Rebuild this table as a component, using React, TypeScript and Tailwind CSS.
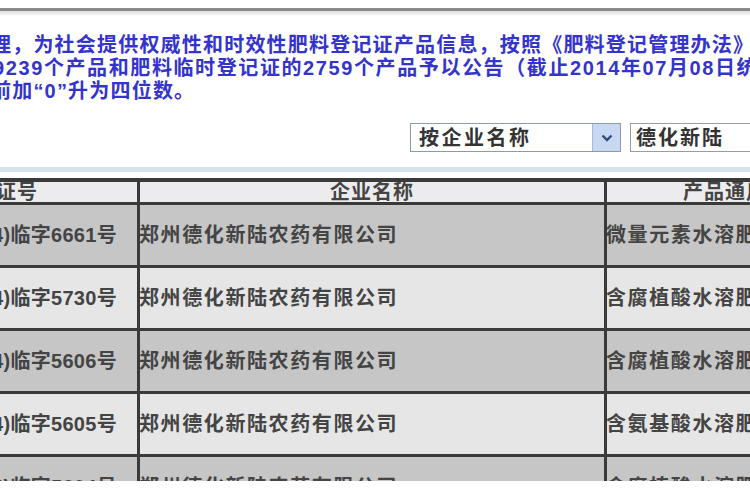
import React from "react";

const rows = [
  { no: "农肥(2014)临字6661号", co: "郑州德化新陆农药有限公司", prod: "微量元素水溶肥料", dark: true },
  { no: "农肥(2014)临字5730号", co: "郑州德化新陆农药有限公司", prod: "含腐植酸水溶肥料", dark: false },
  { no: "农肥(2014)临字5606号", co: "郑州德化新陆农药有限公司", prod: "含腐植酸水溶肥料", dark: true },
  { no: "农肥(2014)临字5605号", co: "郑州德化新陆农药有限公司", prod: "含氨基酸水溶肥料", dark: false },
  { no: "农肥(2014)临字5604号", co: "郑州德化新陆农药有限公司", prod: "含腐植酸水溶肥料", dark: true },
];

export default function App() {
  return (
    <div className="w-[750px] h-[500px] overflow-hidden bg-white flex flex-col font-['Liberation_Sans','Noto_Sans_CJK_SC',sans-serif]">
      <div className="h-[8px] shrink-0" />
      <div className="h-[3px] shrink-0 bg-[#8a8a8a]" />
      <div className="h-[5px] shrink-0 bg-gradient-to-b from-[#dcdcdc] to-white" />

      <div className="mt-[18px] flex flex-col text-[20px] leading-[23px] font-bold text-[#3434cc] whitespace-nowrap tracking-[1.2px]">
        <div className="-ml-[9px]">理，为社会提供权威性和时效性肥料登记证产品信息，按照《肥料登记管理办法》规定</div>
        <div className="-ml-[7px] tracking-[1.6px]">9239个产品和肥料临时登记证的2759个产品予以公告（截止2014年07月08日统计）</div>
        <div className="-ml-[9px]">前加“0”升为四位数。</div>
      </div>

      <div className="mt-[20px] pl-[410px] flex gap-[9px] shrink-0">
        <div className="w-[211px] h-[29px] shrink-0 border border-[#8d9aab] bg-white flex items-stretch">
          <div className="flex-1 flex items-center pl-[8px] text-[20px] font-bold text-[#333] whitespace-nowrap tracking-[2.5px]">按企业名称</div>
          <div className="w-[28px] bg-[#c8d8f0] border-l border-[#a8bcd8] flex items-center justify-center">
            <svg width="12" height="8" viewBox="0 0 12 8">
              <path d="M1.5 1.5 L6 6 L10.5 1.5" fill="none" stroke="#2b4a80" strokeWidth="2.4" />
            </svg>
          </div>
        </div>
        <div className="w-[160px] h-[29px] shrink-0 border border-[#9c9c9c] bg-white flex items-center pl-[5px] text-[20px] font-bold text-[#333] whitespace-nowrap tracking-[2px]">
          德化新陆
        </div>
      </div>

      <div className="mt-[15px] h-[5px] shrink-0 bg-[#d4e3ee]" />
      <div className="h-[6px] shrink-0" />

      <div className="h-[303px] w-[885px] shrink-0 self-start overflow-hidden bg-[#3a3a3a] pt-[4px]">
        <div className="grid grid-cols-[137px_464px_278px] gap-x-[3px] gap-y-[3px] text-[20px] font-bold whitespace-nowrap">
          <div className="h-[20px] bg-[#ececef] flex items-center justify-end pr-[99px] overflow-hidden text-[#444] leading-[20px] tracking-[1px]">登记证号</div>
          <div className="h-[20px] bg-[#ececef] flex items-center justify-center text-[#444] leading-[20px] tracking-[1px]">企业名称</div>
          <div className="h-[20px] bg-[#ececef] flex items-center justify-center text-[#444] leading-[20px] tracking-[1px]">产品通用名称</div>
          {rows.map((r, i) => (
            <React.Fragment key={i}>
              <div className={`h-[60px] flex items-center justify-end pr-[20px] overflow-hidden text-[#444] tracking-[0.3px] ${r.dark ? "bg-[#c6c6c6]" : "bg-[#e6e6e6]"}`}>
                {r.no}
              </div>
              <div className={`h-[60px] flex items-center overflow-hidden text-[#444] tracking-[1.6px] ${r.dark ? "bg-[#c6c6c6]" : "bg-[#e6e6e6]"}`}>
                <span className="-ml-[1px]">{r.co}</span>
              </div>
              <div className={`h-[60px] flex items-center overflow-hidden text-[#444] tracking-[1.6px] ${r.dark ? "bg-[#c6c6c6]" : "bg-[#e6e6e6]"}`}>
                <span className="-ml-[1px]">{r.prod}</span>
              </div>
            </React.Fragment>
          ))}
        </div>
      </div>
    </div>
  );
}
